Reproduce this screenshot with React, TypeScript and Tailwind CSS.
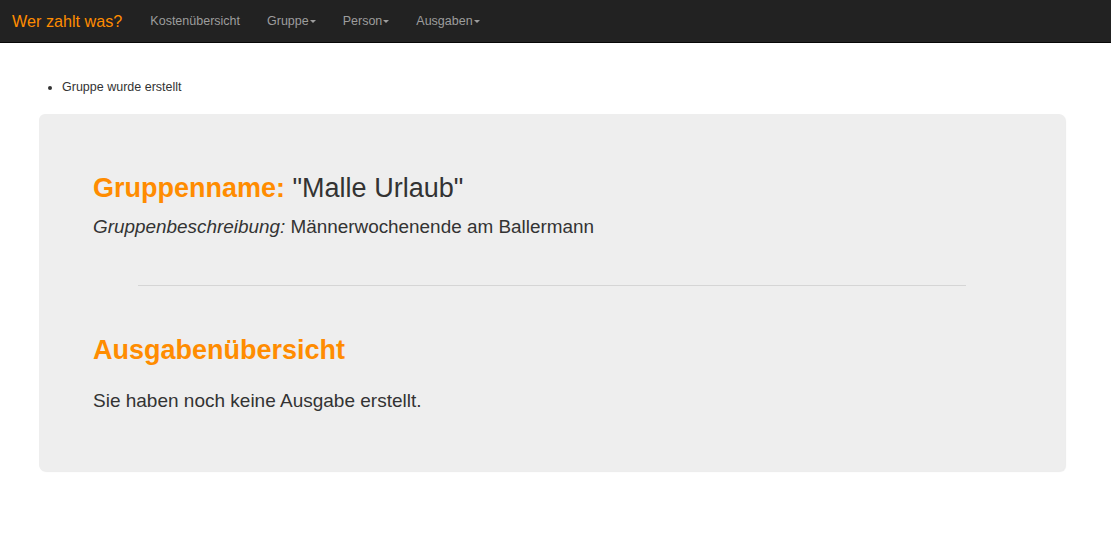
const navItems = [
  { label: "Kostenübersicht", dropdown: false },
  { label: "Gruppe", dropdown: true },
  { label: "Person", dropdown: true },
  { label: "Ausgaben", dropdown: true },
];

function Caret() {
  return (
    <span className="ml-[1px] inline-block w-0 h-0 border-t-[3px] border-t-current border-x-[3px] border-x-transparent align-middle" />
  );
}

export default function App() {
  return (
    <div className="min-h-[556px] bg-white text-[#333] font-['Liberation_Sans',Arial,sans-serif]">
      {/* Navbar */}
      <nav className="h-[43px] bg-[#222] border-b border-[#080808] flex items-center">
        <span className="pl-[12px] pr-[28px] text-[16.2px] text-[#ff8c00]">Wer zahlt was?</span>
        <ul className="flex items-center gap-[27px] text-[12.5px] text-[#9d9d9d]">
          {navItems.map((item) => (
            <li key={item.label}>
              {item.label}
              {item.dropdown && <Caret />}
            </li>
          ))}
        </ul>
      </nav>

      <div className="pl-[39px] pt-[35px]">
        {/* Flash message */}
        <ul className="list-disc pl-[23px] text-[12.5px] leading-[18px]">
          <li>Gruppe wurde erstellt</li>
        </ul>

        {/* Jumbotron */}
        <div className="mt-[18px] w-[1026px] h-[357px] bg-[#eee] rounded-[6px] shadow-[1px_1px_1px_rgba(0,0,0,0.08)] px-[54px] pt-[58px]">
          <h1 className="text-[27px] leading-[32px]">
            <span className="font-bold text-[#ff8c00]">Gruppenname:</span> "Malle Urlaub"
          </h1>
          <p className="mt-[11px] text-[18.9px] leading-[24px]">
            <em>Gruppenbeschreibung:</em> Männerwochenende am Ballermann
          </p>

          <hr className="mt-[46px] mx-[45px] border-0 border-t border-[#d5d5d5]" />

          <h2 className="mt-[48px] text-[27px] leading-[32px] font-bold text-[#ff8c00]">
            Ausgabenübersicht
          </h2>
          <p className="mt-[23px] text-[19px] leading-[24px]">Sie haben noch keine Ausgabe erstellt.</p>
        </div>
      </div>
    </div>
  );
}
